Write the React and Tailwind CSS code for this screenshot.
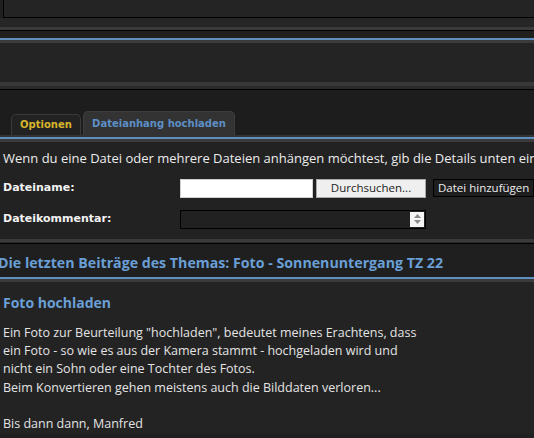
import { useState } from "react";

const tabs = [
  { id: "options", label: "Optionen" },
  { id: "attach", label: "Dateianhang hochladen" },
];

const postLines = [
  'Ein Foto zur Beurteilung "hochladen", bedeutet meines Erachtens, dass',
  "ein Foto - so wie es aus der Kamera stammt - hochgeladen wird und",
  "nicht ein Sohn oder eine Tochter des Fotos.",
  "Beim Konvertieren gehen meistens auch die Bilddaten verloren...",
];

const App = () => {
  const [activeTab, setActiveTab] = useState("attach");
  const [comment, setComment] = useState("");

  return (
    <div className="w-[534px] h-[438px] overflow-hidden bg-[#1f1f1f] text-[#e6e6e6]">
      {/* previous editor box */}
      <div className="h-[18px] ml-[3px] bg-[#242424] border-l border-b border-black" />
      <div className="h-[9px] bg-[#262626]" />
      <div className="h-[3px] bg-[#3a3a3a]" />
      <div className="h-[1px] bg-black" />
      <div className="h-[7px] bg-[#201f1e]" />
      <div className="h-[2px] bg-[#5e8fbd]" />
      <div className="h-[3px] bg-[#3b3b3b]" />
      <div className="h-[39px] bg-[#242424]" />
      <div className="h-[4px] bg-[#383838]" />
      <div className="h-[3px] bg-[#2a2a2a]" />
      <div className="h-[1px] bg-black" />

      {/* tab strip */}
      <div className="h-[21px] bg-[#1d1d1d]" />
      <div className="flex items-end gap-[2px] pl-[11px] bg-[#1d1d1d] h-[24px]">
        {tabs.map((tab) => {
          const active = tab.id === activeTab;
          return (
            <button
              key={tab.id}
              type="button"
              onClick={() => setActiveTab(tab.id)}
              className={`shrink-0 rounded-t-[5px] border border-b-0 font-['DejaVu_Sans',sans-serif] text-[10px] font-bold leading-none ${
                active
                  ? "h-[24px] w-[152px] bg-[#333333] border-[#3d3d3d] text-[#5d8fc6]"
                  : "h-[21px] w-[70px] bg-[#222222] border-[#3a3a3a] text-[#d6b52c]"
              }`}
            >
              {tab.label}
            </button>
          );
        })}
      </div>
      <div className="h-[2px] bg-[#333333]" />
      <div className="h-[2px] bg-[#5e8fbd]" />
      <div className="h-[3px] bg-[#3b3b3b]" />

      {/* upload form */}
      <div className="bg-[#222222] font-['DejaVu_Sans',sans-serif]">
        <p className="pl-[3px] pt-[7px] whitespace-nowrap text-[13px] leading-[18px] font-['Open_Sans',sans-serif] text-[#ececec]">
          Wenn du eine Datei oder mehrere Dateien anhängen möchtest, gib die Details unten ein
        </p>
        <div className="flex items-center h-[20px] mt-[11px] whitespace-nowrap">
          <label className="shrink-0 w-[180px] pl-[3px] text-[11px] font-bold text-[#f2f2f2]">Dateiname:</label>
          <input
            type="text"
            className="shrink-0 w-[133px] h-[19px] bg-white border border-[#d0d0d0] outline-none"
          />
          <button
            type="button"
            className="shrink-0 ml-[3px] w-[110px] h-[19px] bg-[#efefef] border border-[#a9a9a9] text-[11.5px] font-['Open_Sans',sans-serif] text-[#222] leading-none"
          >
            Durchsuchen...
          </button>
          <button
            type="button"
            className="shrink-0 ml-[7px] h-[18px] px-[4px] bg-[#1e1e1e] border border-black text-[11.5px] font-['Open_Sans',sans-serif] text-[#ececec] leading-none"
          >
            Datei hinzufügen
          </button>
        </div>
        <div className="flex items-center h-[20px] mt-[11px]">
          <label className="shrink-0 w-[180px] pl-[3px] text-[11px] font-bold text-[#f2f2f2]">Dateikommentar:</label>
          <div className="relative shrink-0 w-[246px] h-[19px] bg-[#212121] border border-black">
            <input
              value={comment}
              onChange={(e) => setComment(e.target.value)}
              className="w-full h-full bg-transparent outline-none px-1 text-[12px]"
            />
            <div className="absolute right-[1px] top-[1px] bottom-[1px] w-[14px] bg-[#f4f4f4] flex flex-col items-center justify-center gap-[2px]">
              <svg width="7" height="4" viewBox="0 0 7 4"><path d="M0 4 L3.5 0 L7 4 Z" fill="#8a8a8a" /></svg>
              <svg width="7" height="4" viewBox="0 0 7 4"><path d="M0 0 L3.5 4 L7 0 Z" fill="#8a8a8a" /></svg>
            </div>
          </div>
        </div>
        <div className="h-[10px]" />
      </div>
      <div className="h-[3px] bg-[#3a3a3a]" />
      <div className="h-[1px] bg-[#2a2a2a]" />
      <div className="h-[1px] bg-black" />

      {/* topic review */}
      <div className="h-[33px] bg-[#1f1f1f] flex items-center pt-[5px]">
        <h3 className="-ml-[2px] whitespace-nowrap font-['Open_Sans',sans-serif] text-[14.2px] font-bold text-[#6a9fd6]">
          Die letzten Beiträge des Themas: Foto - Sonnenuntergang TZ 22
        </h3>
      </div>
      <div className="h-[2px] bg-[#5e8fbd]" />
      <div className="h-[3px] bg-[#3b3b3b]" />

      <div className="bg-[#232323] pl-[3px] pt-[11px] font-['Open_Sans',sans-serif]">
        <h4 className="text-[14px] font-bold leading-[20px] text-[#6a9fd6]">Foto hochladen</h4>
        <div className="mt-[11px] text-[12.5px] leading-[18.2px] text-[#e4e4e4]">
          {postLines.map((line) => (
            <p key={line} className="whitespace-nowrap">{line}</p>
          ))}
          <p className="h-[18.2px]" />
          <p>Bis dann dann, Manfred</p>
        </div>
      </div>
    </div>
  );
};

export default App;
